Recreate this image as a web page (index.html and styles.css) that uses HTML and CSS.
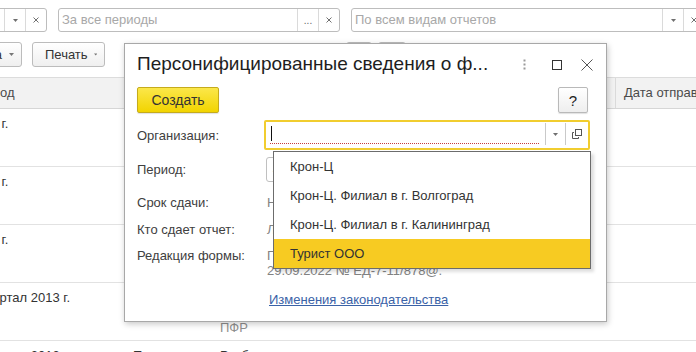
FILE: index.html
```html
<!DOCTYPE html>
<html lang="ru">
<head>
<meta charset="utf-8">
<title>Отчеты</title>
<link rel="stylesheet" href="styles.css">
</head>
<body>
<div class="page">
  <div class="filters">
    <div class="field f1">
      <span class="ftext"></span>
      <span class="fbtn"><svg width="5" height="3" viewBox="0 0 5 3"><polygon points="0,0 5,0 2.5,3" fill="#6f6f6f"/></svg></span>
      <span class="fbtn"><svg width="6" height="6" viewBox="0 0 6 6"><path d="M0.5 0.5 L5.5 5.5 M5.5 0.5 L0.5 5.5" stroke="#707070" stroke-width="1"/></svg></span>
    </div>
    <div class="field f2">
      <span class="ftext">За все периоды</span>
      <span class="fbtn dots">...</span>
      <span class="fbtn"><svg width="6" height="6" viewBox="0 0 6 6"><path d="M0.5 0.5 L5.5 5.5 M5.5 0.5 L0.5 5.5" stroke="#707070" stroke-width="1"/></svg></span>
    </div>
    <div class="field f3">
      <span class="ftext">По всем видам отчетов</span>
      <span class="fbtn"><svg width="5" height="3" viewBox="0 0 5 3"><polygon points="0,0 5,0 2.5,3" fill="#6f6f6f"/></svg></span>
      <span class="fbtn"><svg width="6" height="6" viewBox="0 0 6 6"><path d="M0.5 0.5 L5.5 5.5 M5.5 0.5 L0.5 5.5" stroke="#707070" stroke-width="1"/></svg></span>
    </div>
  </div>

  <div class="toolbar">
    <div class="btn b1">Отправка<svg class="caret" width="5" height="3" viewBox="0 0 5 3"><polygon points="0,0 5,0 2.5,3" fill="#777"/></svg></div>
    <div class="btn b2">Печать<svg class="caret" width="5" height="3" viewBox="0 0 5 3"><polygon points="0,0 5,0 2.5,3" fill="#777"/></svg></div>
    <div class="hidden-group">
      <div class="btn small"></div>
      <div class="btn small wide"></div>
    </div>
  </div>

  <div class="table">
    <div class="trow thead">
      <div class="cell c1">Период</div>
      <div class="cell c2">Организация</div>
      <div class="cell c3">Вид отчета</div>
      <div class="cell c4 hsep">Дата отправки</div>
    </div>
    <div class="trow">
      <div class="cell c1">2014 г.</div>
      <div class="cell c2"></div>
      <div class="cell c3"></div>
      <div class="cell c4"></div>
    </div>
    <div class="trow">
      <div class="cell c1">2014 г.</div>
      <div class="cell c2"></div>
      <div class="cell c3"></div>
      <div class="cell c4"></div>
    </div>
    <div class="trow">
      <div class="cell c1">2013 г.</div>
      <div class="cell c2"></div>
      <div class="cell c3"></div>
      <div class="cell c4"></div>
    </div>
    <div class="trow">
      <div class="cell c1">4 квартал 2013 г.</div>
      <div class="cell c2">Крон-Ц</div>
      <div class="cell c3">Расчет по начисленным<br>и уплаченным взносам<br><span class="muted">ПФР</span></div>
      <div class="cell c4"></div>
    </div>
    <div class="trow">
      <div class="cell c1">3 квартал 2013 г.</div>
      <div class="cell c2">Подготовлен</div>
      <div class="cell c3">Разбор</div>
      <div class="cell c4"></div>
    </div>
  </div>
</div>

<div class="dialog">
  <div class="dhead">
    <div class="dtitle">Персонифицированные сведения о ф...</div>
    <div class="dicons">
      <svg width="3" height="12" viewBox="0 0 3 12"><rect x="0.5" y="0.5" width="2" height="2" fill="#9a9a9a"/><rect x="0.5" y="4.5" width="2" height="2" fill="#9a9a9a"/><rect x="0.5" y="8.5" width="2" height="2" fill="#9a9a9a"/></svg>
      <svg width="10" height="10" viewBox="0 0 10 10"><rect x="0.5" y="0.5" width="9" height="9" fill="none" stroke="#333" stroke-width="1"/></svg>
      <svg width="12" height="12" viewBox="0 0 12 12"><path d="M0.5 0.5 L11.5 11.5 M11.5 0.5 L0.5 11.5" stroke="#555" stroke-width="1"/></svg>
    </div>
  </div>

  <div class="dtool">
    <div class="btn-create">Создать</div>
    <div class="btn-help">?</div>
  </div>

  <div class="form">
    <div class="frow r-org">
      <div class="flabel">Организация:</div>
      <div class="org-input">
        <div class="org-text"><span class="cursor"></span><span class="required"></span></div>
        <div class="org-btn"><svg width="5" height="3" viewBox="0 0 5 3"><polygon points="0,0 5,0 2.5,3" fill="#6f6f6f"/></svg></div>
        <div class="org-btn open"><svg width="10" height="10" viewBox="0 0 10 10"><rect x="3.5" y="0.5" width="6" height="6" fill="none" stroke="#555" stroke-width="1"/><path d="M2 3.5 H0.5 V9.5 H6.5 V8" fill="none" stroke="#555" stroke-width="1"/></svg></div>
      </div>
    </div>
    <div class="frow r-period">
      <div class="flabel">Период:</div>
      <div class="period-input">4 квартал 2023 г.</div>
    </div>
    <div class="frow r-text">
      <div class="flabel">Срок сдачи:</div>
      <div class="fvalue">Не позднее 25.01.2024</div>
    </div>
    <div class="frow r-text">
      <div class="flabel">Кто сдает отчет:</div>
      <div class="fvalue">Лично организацией</div>
    </div>
    <div class="frow r-multi">
      <div class="flabel">Редакция формы:</div>
      <div class="fvalue">Приказ ФНС России от<br>29.09.2022 № ЕД-7-11/878@.</div>
    </div>
    <div class="frow r-link">
      <div class="flabel"></div>
      <a class="flink" href="#">Изменения законодательства</a>
    </div>
  </div>

  <div class="dropdown">
    <div class="ditem">Крон-Ц</div>
    <div class="ditem">Крон-Ц. Филиал в г. Волгоград</div>
    <div class="ditem">Крон-Ц. Филиал в г. Калининград</div>
    <div class="ditem selected">Турист ООО</div>
  </div>
</div>
</body>
</html>
```

FILE: styles.css
```css
html, body {
  margin: 0;
  padding: 0;
}

body {
  width: 696px;
  height: 352px;
  overflow: hidden;
  position: relative;
  background: #fff;
  font-family: "Liberation Sans", Arial, sans-serif;
  font-size: 13px;
  color: #333;
}

/* ---------- filter fields ---------- */
.filters {
  display: flex;
  gap: 11px;
  padding-top: 8px;
  margin-left: -60px;
}

.field {
  height: 24px;
  box-sizing: border-box;
  border: 1px solid #bdbdbd;
  border-radius: 3px;
  display: flex;
  background: #fff;
  flex: none;
}

.f1 { width: 107px; }
.f2 { width: 282px; }
.f3 { width: 354px; }

.ftext {
  flex: 1;
  padding-left: 3px;
  line-height: 22px;
  color: #a8a8a8;
  white-space: nowrap;
  overflow: hidden;
}

.fbtn {
  flex: 0 0 21px;
  box-sizing: border-box;
  border-left: 1px solid #dadada;
  display: flex;
  align-items: center;
  justify-content: center;
}

.fbtn.dots {
  font-size: 10px;
  color: #666;
  align-items: flex-end;
  padding-bottom: 5px;
}

/* ---------- toolbar ---------- */
.toolbar {
  display: flex;
  gap: 10px;
  margin-top: 10px;
  height: 25px;
}

.btn {
  height: 25px;
  box-sizing: border-box;
  border: 1px solid #bcbcbc;
  border-radius: 3px;
  background: linear-gradient(#ffffff, #efefef);
  display: flex;
  align-items: center;
  gap: 7px;
  padding: 0 7px 0 13px;
  color: #333;
  white-space: nowrap;
  flex: none;
}

.b1 {
  width: 100px;
  margin-left: -78px;
  justify-content: flex-end;
}

.b2 {
  width: 73px;
  padding: 0 7px 0 12px;
  gap: 6px;
}

.hidden-group {
  display: flex;
  gap: 6px;
  margin-left: 231px;
}

.btn.small { width: 26px; padding: 0; }
.btn.small.wide { width: 28px; }

/* ---------- table ---------- */
.table {
  margin-top: 10px;
  margin-left: -40px;
  width: 780px;
}

.trow {
  display: grid;
  grid-template-columns: 165px 87px 403px 1fr;
  height: 58px;
  box-sizing: border-box;
  border-bottom: 1px solid #e2e2e2;
}

.thead {
  height: 32px;
  background: #f2f2f2;
  border-top: 1px solid #dcdcdc;
  border-bottom: 1px solid #d6d6d6;
}

.cell {
  padding: 7px 8px 0 8px;
  line-height: 15px;
  white-space: nowrap;
  overflow: hidden;
}

.thead .cell {
  padding-top: 0;
  line-height: 30px;
  color: #4a4a4a;
}

.c1 { padding-left: 9px; }
.hsep { border-left: 1px solid #dadada; }
.muted { color: #8f8f8f; }

/* ---------- dialog ---------- */
.dialog {
  position: absolute;
  left: 124px;
  top: 43px;
  width: 483px;
  height: 279px;
  box-sizing: border-box;
  border: 1px solid #a8a8a8;
  background: #fff;
  box-shadow: 1px 2px 6px rgba(0, 0, 0, 0.22);
}

.dhead {
  height: 42px;
  display: flex;
  align-items: center;
  padding: 0 13px 0 12px;
}

.dtitle {
  flex: 1;
  font-size: 19px;
  color: #1e1e1e;
  white-space: nowrap;
  padding-bottom: 2px;
}

.dicons {
  display: flex;
  align-items: center;
}

.dicons svg:nth-child(1) { margin-right: 26px; }
.dicons svg:nth-child(2) { margin-right: 19px; }

.dtool {
  display: flex;
  justify-content: space-between;
  align-items: center;
  padding: 1px 18px 0 12px;
  height: 26px;
}

.btn-create {
  width: 82px;
  height: 26px;
  box-sizing: border-box;
  border: 1px solid #c5ab1c;
  border-radius: 2px;
  background: linear-gradient(#fbe74a, #f2d400);
  display: flex;
  align-items: center;
  justify-content: center;
  font-size: 14px;
  color: #333;
  box-shadow: 0 1px 1px rgba(0, 0, 0, 0.12);
}

.btn-help {
  width: 30px;
  height: 26px;
  box-sizing: border-box;
  border: 1px solid #b9b9b9;
  border-radius: 2px;
  background: linear-gradient(#ffffff, #eeeeee);
  display: flex;
  align-items: center;
  justify-content: center;
  font-size: 15px;
  color: #222;
  box-shadow: 0 1px 1px rgba(0, 0, 0, 0.12);
}

.form {
  padding-left: 12px;
}

.frow {
  display: flex;
  align-items: center;
}

.flabel {
  flex: 0 0 128px;
  color: #404040;
  line-height: 15px;
  white-space: nowrap;
}

.r-org { margin-top: 7px; height: 30px; }
.r-period { margin-top: 7px; height: 25px; }
.r-text { margin-top: 7px; height: 26px; }
.r-text + .r-text { margin-top: 1px; }
.r-multi { margin-top: 6px; align-items: flex-start; }
.r-link { margin-top: 14px; }

.org-input {
  margin-left: -1px;
  width: 326px;
  height: 30px;
  box-sizing: border-box;
  border: 2px solid #f1cd2f;
  border-radius: 2px;
  display: flex;
  background: #fff;
}

.org-text {
  flex: 1;
  position: relative;
}

.cursor {
  position: absolute;
  left: 5px;
  top: 4px;
  width: 1px;
  height: 15px;
  background: #111;
}

.required {
  position: absolute;
  left: 4px;
  right: 6px;
  top: 21px;
  border-bottom: 1px dotted #c83c3c;
}

.org-btn {
  flex: 0 0 20px;
  box-sizing: border-box;
  border-left: 1px solid #c9c9c9;
  margin: 1px 0 3px;
  display: flex;
  align-items: center;
  justify-content: center;
}

.org-btn.open { flex-basis: 23px; }

.period-input {
  margin-left: 1px;
  width: 150px;
  height: 25px;
  box-sizing: border-box;
  border: 1px solid #c0c0c0;
  border-radius: 3px;
  padding-left: 6px;
  line-height: 23px;
  color: #333;
}

.fvalue {
  padding-left: 2px;
  color: #828282;
  line-height: 15px;
  white-space: nowrap;
}

.flink {
  padding-left: 4px;
  color: #3a62a7;
  text-decoration: underline;
  line-height: 15px;
}

/* ---------- dropdown list (overlay) ---------- */
.dropdown {
  position: absolute;
  left: 148px;
  top: 107px;
  width: 318px;
  box-sizing: border-box;
  border: 1px solid #6c6c6c;
  background: #fff;
  box-shadow: 3px 3px 3px rgba(0, 0, 0, 0.13);
}

.ditem {
  height: 29px;
  line-height: 29px;
  padding-left: 16px;
  color: #333;
  white-space: nowrap;
}

.ditem.selected {
  background: #f7cb22;
}
```
